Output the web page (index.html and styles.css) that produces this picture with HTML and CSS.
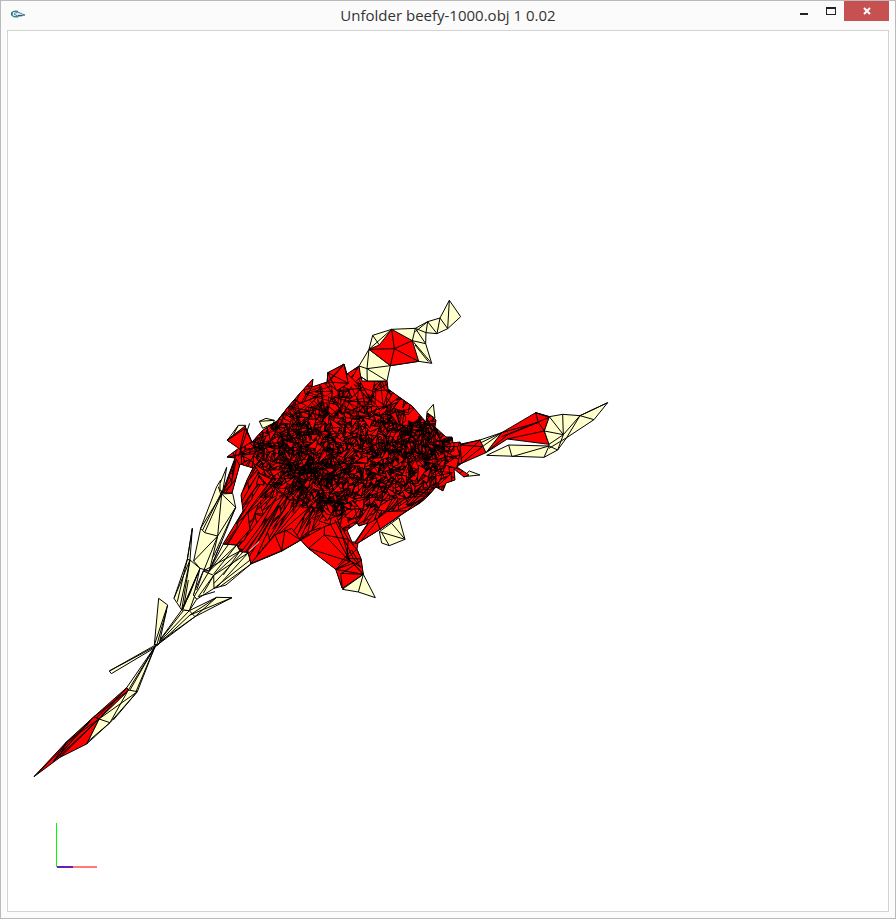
FILE: index.html
```html
<!DOCTYPE html>
<html lang="en">
<head>
<meta charset="utf-8">
<title>Unfolder beefy-1000.obj 1 0.02</title>
<link rel="stylesheet" href="styles.css">
</head>
<body>
<div class="window">
  <header class="titlebar">
    <svg class="app-icon" viewBox="0 0 16 16" aria-hidden="true">
      <path d="M8 5.500C4 4.500 1.500 6 1.500 8s3 3.500 7 2.500" fill="none" stroke="#3d8795" stroke-width="1.500"/>
      <path d="M4 8Q7 4.500 11 7.500L15 9L11 10Q7 11 4 8Z" fill="#d7e6ee" stroke="#537b91"/>
      <path d="M2 6.500V9M8 9.500H12" stroke="#166174" stroke-width="1"/>
    </svg>
    <h1 class="title">Unfolder beefy-1000.obj 1 0.02</h1>
    <div class="controls">
      <button class="control minimize" aria-label="Minimize"><svg viewBox="0 0 10 8"><path d="M1 6h8v2H1z"/></svg></button>
      <button class="control maximize" aria-label="Maximize"><svg viewBox="0 0 10 8"><path fill-rule="evenodd" d="M0 0h10v8H0zM1 2v5h8V2z"/></svg></button>
      <button class="control close" aria-label="Close"><svg viewBox="0 0 8 8"><path d="M1 1l6 6M7 1L1 7"/></svg></button>
    </div>
  </header>
  <main class="viewport">
    <svg class="scene" viewBox="8 31 880 880" role="img" aria-label="Unfolded mesh">
      <defs>
        <path id="hull" clip-rule="evenodd" fill-rule="evenodd" d="M227 440L245 426 252 442 263 430 277 421 288 407 301 392 313 379 312 387 327 382 328 373 344 364 347 374 359 366 362 381 387 381 388 389 402 399 412 406 426 422 427 413 436 420 435 427 446 437 452 437 453 443 460 442 461 444 480 440 485 448 462 463 457 467 469 475 464 477 454 469 455 480 446 483 443 491 436 487 427 497 420 503 407 511 379 530 358 543 357 549 361 559 363 574 342 588 336 569 308 548 301 540 282 551 251 564 248 552 241 552 237 545 223 544 243 511 241 495 247 480 253 468 240 464 232 493 222 493 235 458 227 457 239 448ZM347 530L357 523 359 526 368 523 355 542 352 542Z"/>
        <clipPath id="hull-clip"><use href="#hull"/></clipPath>
      </defs>

      <g class="thirds" transform="translate(100 480) scale(.33333)">
        <path class="cream" d="M362 0L365 42 398 40 407 82 365 185 328 273 300 265 281 243 302 145 350 20Z"/>
        <path class="crease" d="M365 42L302 145 314 158 353 168 365 42 407 82 353 168 281 243M365 42L314 158M353 168L328 273 365 185M355 20L362 42 308 150M353 168L312 270M407 82L340 230"/>
        <path class="cream" d="M370 192L410 195 420 213 445 218 453 252 378 315 342 325 290 358 280 345 285 330 310 273 328 273Z"/>
        <path class="crease" d="M410 195L328 273M420 213L310 273 341 286 342 325M445 218L341 286 295 350M385 194L328 273M420 213L341 286M410 195L341 282M430 215L342 310M453 238L342 325M445 218L350 323M453 252L360 320M310 273L290 330M328 273L285 345M341 286L310 340M420 213L370 285M295 350L345 335"/>
        <path class="cream" d="M277 145L270 240 300 265 285 330 280 345 290 358 268 392 245 390 222 355 262 238Z"/>
        <path class="crease" d="M277 145L262 238 270 240 222 355M270 240L245 390 300 265M262 238L232 365M270 240L240 380M300 265L268 345 245 390M285 345L268 392M265 300L250 387M293 280L252 380"/>
        <path class="cream" d="M245 390L268 392 350 352 396 353 285 410 165 500Z"/>
        <path class="crease" d="M268 392L165 500M350 352L270 405 396 353M268 392L285 410 165 495M270 405L170 498M250 392L165 500M285 410L350 352"/>
        <path class="cream" d="M176 355L203 375 178 490 163 495Z"/>
        <path class="crease" d="M203 375L163 495M200 390L172 490"/>
        <path class="cream" d="M163 497L28 573 34 581 165 503Z"/>
        <path class="crease" d="M28 573L165 500"/>
      </g>

      <g class="thirds" transform="translate(20 640) scale(.33333)">
        <path class="cream" d="M405 20L352 155 270 248 200 312 237 237 325 150 320 143Z"/>
        <path class="crease" d="M405 20L325 150 352 155 237 237 270 248M405 20L330 150M325 150L270 248M405 20L348 155M352 155L280 240M270 248L203 305"/>
        <path class="red" d="M320 143L325 152 237 237 200 312 120 352 42 410 140 305 222 230Z"/>
        <path class="crease" d="M320 143L237 237 222 230M325 152L222 230 42 410M237 237L140 305 100 365 237 237 120 352M222 230L100 365M140 305L120 345M315 150L228 235M210 245L125 335"/>
      </g>

      <g class="thirds" transform="translate(220 360) scale(.33333)">
        <path class="cream" d="M22 241L55 196 77 196 75 205ZM118 184L138 175 163 181 160 190 128 205ZM20 322L8 395 0 390 0 370Z"/>
        <path class="crease" d="M55 196L40 225M118 184L163 181"/>
      </g>
      <g class="thirds" transform="translate(340 370) scale(.33333)">
        <path class="cream" d="M260 127L280 103 285 145ZM370 320L388 303 420 315Z"/>
      </g>
      <g class="thirds" transform="translate(220 480) scale(.33333)">
        <path class="cream" d="M478 155L537 113 555 178 508 197 485 189ZM367 328L430 283 466 353 415 336Z"/>
        <path class="crease" d="M478 155L555 178 515 130M485 158L508 197M430 283L415 336"/>
      </g>

      <g id="facets" clip-path="url(#hull-clip)"></g>
      <use class="outline" href="#hull"/>

      <g class="thirds" transform="translate(220 360) scale(.33333)">
        <path class="red" d="M22 241L75 205 95 245 60 268ZM323 38L372 13 385 70 350 92 322 66Z"/>
        <path class="crease" d="M75 205L60 268M89 190L55 290M22 292L100 275M323 38L385 70 322 66 372 13 330 62M323 38L350 92"/>
      </g>

      <g class="thirds" transform="translate(220 480) scale(.33333)">
        <path class="red" d="M242 180L313 140 355 125 385 178 410 208 423 237 430 283 367 325 347 268 265 205Z"/>
        <path class="crease" d="M265 205L313 165 385 178M313 140L313 165 390 245 265 205M355 125L390 245 347 268 400 250 430 283 347 268M385 178L380 235 423 237M410 208L347 268M330 130L385 235 430 283 362 280 367 325M345 120L400 235 423 262 380 235M242 180L300 130M365 280L425 240M355 255L395 210 418 250"/>
        <path class="red" d="M92 251L185 212 242 180 215 145 165 165Z"/>
        <path class="crease" d="M165 165L185 212 195 150 242 180"/>
        <path class="red" d="M405 190L445 130 480 112 480 148 412 190Z"/>
        <path class="crease" d="M425 180L480 112"/>
        <path class="red" d="M470 118L480 148 560 92 500 95Z"/>
        <path class="gap" d="M88 213L118 184"/>
      </g>

      <g class="thirds" transform="translate(340 290) scale(.33333)">
        <path class="cream" d="M328 31L362 80 323 116 291 131 258 128 257 161 275 220 236 214 151 227 141 273 82 273 62 260 57 228 87 178 98 136 155 118 226 115 263 95 300 84Z"/>
        <path class="crease" d="M328 31L323 116 300 84 291 131 263 95 258 128 226 115 257 161 217 152 226 115M263 95L226 125M217 152L275 220M225 165L265 215M98 136L118 165M87 178L81 236 57 228M81 236L151 227M81 236L141 273M81 236L82 273 62 260M87 178L151 227"/>
        <path class="red" d="M87 178L118 165 155 118 217 152 236 214 151 227Z"/>
        <path class="crease" d="M87 178L163 176 155 118 87 178M217 152L163 176 236 214M163 176L151 227"/>
      </g>

      <g class="thirds" transform="translate(450 390) scale(.33333)">
        <path class="red" d="M30 165L90 150 108 188 35 220Z"/>
        <path class="crease" d="M30 165L97 170 35 220M35 205L90 150"/>
        <path class="red" d="M108 188L155 128 257 68 298 82 283 123 297 163 172 147Z"/>
        <path class="crease" d="M155 128L265 97 257 68M172 147L283 123M155 140L298 82M265 97L283 123M108 188L172 135 265 97"/>
        <path class="cream" d="M90 150L155 128 108 188Z"/>
        <path class="crease" d="M97 170L155 128 93 158"/>
        <path class="cream" d="M257 68L298 80 338 73 390 77 473 38 432 89 350 143 323 180 282 202 110 196 176 165 297 168 297 163 283 123 298 80Z"/>
        <path class="crease" d="M298 80L340 134 283 123M338 73L340 134 390 77 432 89M390 77L350 143M473 38L390 77M176 165L186 200 297 168 323 180M297 168L282 202M340 134L323 180M340 134L297 163M350 143L297 175"/>
      </g>

      <g class="axes">
        <path class="axis-x" d="M57 867H97"/>
        <path class="axis-z" d="M57 867H73"/>
        <path class="axis-y" d="M56.500 823V867"/>
      </g>
    </svg>
  </main>
</div>
<script src="mesh.js"></script>
</body>
</html>
```
FILE: styles.css
```css
* {
  box-sizing: border-box;
}

body {
  margin: 0;
  background: #fbfbfb;
}

.window {
  min-height: 100vh;
  padding: 0 6px 6px;
  border: 1px solid #bababa;
  background: #fbfbfb;
}

.titlebar {
  display: grid;
  grid-template-columns: 1fr auto 1fr;
  align-items: start;
  height: 29px;
}

.app-icon {
  width: 16px;
  height: 16px;
  margin: 5px 3px;
}

.title {
  margin: 0;
  font: 400 15px/29px "Open Sans", "Noto Sans", sans-serif;
  color: #333;
}

.controls {
  display: flex;
  justify-content: flex-end;
}

.control {
  display: flex;
  align-items: center;
  justify-content: center;
  width: 27px;
  height: 20px;
  padding: 0;
  border: 0;
  background: transparent;
}

.control svg {
  width: 10px;
  height: 8px;
  fill: #222;
  shape-rendering: crispEdges;
}

.control.close {
  width: 45px;
  background: #c75050;
}

.control.close svg {
  width: 8px;
  height: 8px;
  stroke: #fff;
  stroke-width: 2;
  shape-rendering: auto;
}

.viewport {
  border: 1px solid #d3d3d3;
  background: #fff;
}

.scene {
  display: block;
  width: 100%;
  height: auto;
}

.scene path {
  stroke-linejoin: round;
}

.thirds path {
  stroke: #000;
  stroke-width: 3;
}

.cream {
  fill: #ffffcc;
}

.red,
#facets {
  fill: #f00;
}

.thirds .crease {
  fill: none;
}

.thirds .gap {
  stroke: #fff;
}

#facets path {
  stroke: #000;
  stroke-width: 1;
}

#facets .wire {
  fill: none;
  stroke-width: .8;
}

.outline {
  fill: none;
  stroke: #000;
}

.axes path {
  fill: none;
  stroke-width: 1;
}

.axes .axis-x {
  stroke: #ff4040;
  stroke-width: 2;
  opacity: .7;
}

.axes .axis-z {
  stroke: #6a1fb0;
  stroke-width: 2;
}

.axes .axis-y {
  stroke: #0f0;
}
```
FILE: mesh.js
```js
// Fills the hull with overlapping facets, seeded so every load is identical.
let seed = 1000;
function random() {
  seed = (seed * 1664525 + 1013904223) % 4294967296;
  return seed / 4294967296;
}

function facet(x, y, length, width, angle) {
  const dx = Math.cos(angle) * length / 2;
  const dy = Math.sin(angle) * length / 2;
  const nx = -Math.sin(angle) * width;
  const ny = Math.cos(angle) * width;
  const t = random() * 2 - 1;
  const points = [[x - dx, y - dy], [x + dx, y + dy], [x + nx + dx * t, y + ny + dy * t]];
  return "M" + points.map(p => p.map(v => v.toFixed(1)).join(" ")).join("L") + "Z";
}

// [centre x, centre y, radius x, radius y, count, length, width, angle, angle spread, wire]
const clusters = [
  [345, 460, 140, 110, 160, 42, 22, -0.8, 3],
  [345, 458, 108, 56, 500, 20, 9, -0.7, 3],
  [345, 400, 75, 32, 110, 30, 20, -0.6, 3],
  [345, 400, 70, 34, 40, 28, 14, -0.9, 3, true],
  [232, 470, 18, 40, 10, 40, 12, -1.2, 0.7],
  [260, 520, 42, 48, 80, 70, 9, -0.95, 0.3],
  [395, 495, 55, 30, 90, 28, 8, -0.7, 0.8],
  [345, 458, 104, 52, 170, 20, 7, -0.7, 3, true],
  [345, 458, 100, 46, 320, 12, 6, -0.7, 3],
  [295, 445, 42, 28, 60, 12, 5, -0.7, 3, true],
  [320, 485, 38, 32, 85, 13, 5, -0.7, 3, true],
  [425, 442, 26, 22, 55, 11, 4, -0.7, 3, true],
  [370, 462, 45, 26, 50, 12, 5, -0.7, 3, true]
];

const facets = document.getElementById("facets");
const base = document.createElementNS("http://www.w3.org/2000/svg", "use");
base.setAttribute("href", "#hull");
facets.append(base);
for (const [cx, cy, rx, ry, count, length, width, angle, spread, wire] of clusters) {
  for (let i = 0; i < count; i++) {
    const r = Math.sqrt(random());
    const a = random() * Math.PI * 2;
    const path = document.createElementNS("http://www.w3.org/2000/svg", "path");
    if (wire) path.setAttribute("class", "wire");
    path.setAttribute("d", facet(
      cx + Math.cos(a) * r * rx,
      cy + Math.sin(a) * r * ry,
      length * (0.5 + random()),
      width * (0.3 + random()),
      angle + (random() - 0.5) * spread
    ));
    facets.append(path);
  }
}
```
